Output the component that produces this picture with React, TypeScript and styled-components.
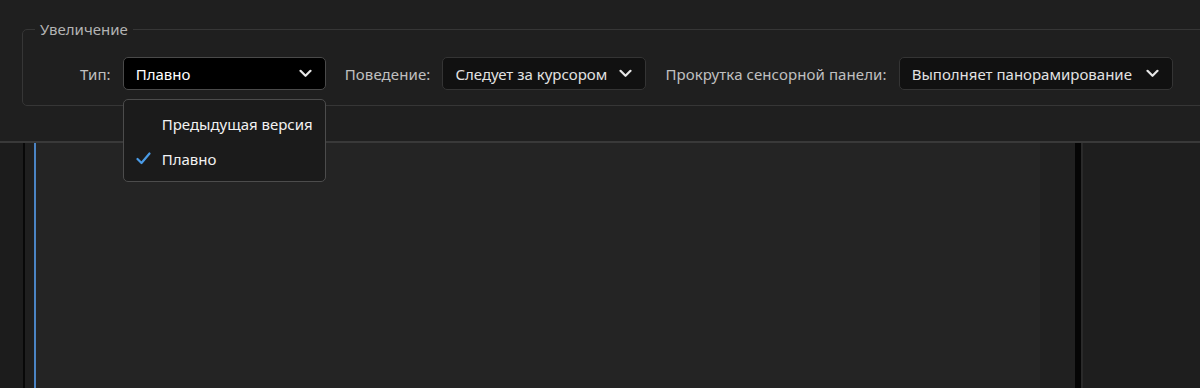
import React, { useState } from "react";
import styled, { createGlobalStyle } from "styled-components";

const GlobalStyle = createGlobalStyle`
  html, body {
    margin: 0;
    padding: 0;
    background: #1f1f1f;
    font-family: "Noto Sans", "Open Sans", sans-serif;
  }
`;

const Chevron = () => (
  <svg width="13" height="9" viewBox="0 0 13 9" fill="none">
    <path d="M1.5 1.8 L6.5 6.8 L11.5 1.8" stroke="#e6e6e6" strokeWidth="2.2" strokeLinecap="round" strokeLinejoin="round" />
  </svg>
);

const Check = () => (
  <svg width="15" height="13" viewBox="0 0 15 13" fill="none">
    <path d="M1.5 7 L5.5 11 L13.5 1.5" stroke="#4a9be6" strokeWidth="2.2" strokeLinecap="round" strokeLinejoin="round" />
  </svg>
);

const zoomTypes = ["Предыдущая версия", "Плавно"];

const App = () => {
  const [type, setType] = useState("Плавно");
  const [open, setOpen] = useState(true);

  return (
    <Page>
      <GlobalStyle />
      <TopPanel>
        <Group>
          <Legend>Увеличение</Legend>
          <Row>
            <Label>Тип:</Label>
            <SelectWrap>
              <Select $width={203} $active={open} onClick={() => setOpen(!open)}>
                <span>{type}</span>
                <Chevron />
              </Select>
              {open && (
                <Menu>
                  {zoomTypes.map((item) => (
                    <MenuItem
                      key={item}
                      onClick={() => {
                        setType(item);
                        setOpen(false);
                      }}
                    >
                      <CheckSlot>{type === item && <Check />}</CheckSlot>
                      {item}
                    </MenuItem>
                  ))}
                </Menu>
              )}
            </SelectWrap>
            <Label $gap={19}>Поведение:</Label>
            <Select $width={204}>
              <span>Следует за курсором</span>
              <Chevron />
            </Select>
            <Label $gap={19}>Прокрутка сенсорной панели:</Label>
            <Select $width={274}>
              <span>Выполняет панорамирование</span>
              <Chevron />
            </Select>
          </Row>
        </Group>
      </TopPanel>
      <Workspace>
        <Strip $width={23} $bg="#1c1c1c" />
        <Strip $width={2} $bg="#080808" />
        <Strip $width={9} $bg="#1f1f1f" />
        <Strip $width={2} $bg="#4b84c4" />
        <Canvas />
        <Strip $width={35} $bg="#202020" />
        <Strip $width={6} $bg="#050505" />
        <Strip $width={2} $bg="#2a2a2a" />
        <Side />
      </Workspace>
    </Page>
  );
};

export default App;

const Page = styled.div`
  width: 1200px;
  height: 388px;
  display: flex;
  flex-direction: column;
  overflow: hidden;
`;

const TopPanel = styled.div`
  height: 143px;
  flex-shrink: 0;
  background: #1f1f1f;
  border-bottom: 2px solid #393939;
  padding: 21px 0 0 22px;
  box-sizing: border-box;
  position: relative;
  z-index: 1;
`;

const Group = styled.fieldset`
  margin: 0;
  width: 1220px;
  border: 1px solid #363636;
  border-radius: 5px;
  padding: 19px 0 15px 0;
  box-sizing: border-box;
`;

const Legend = styled.legend`
  margin-left: 12px;
  padding: 0 5px;
  font-size: 15px;
  line-height: 17px;
  color: #b3b3b3;
`;

const Row = styled.div`
  display: flex;
  align-items: center;
  padding-left: 57px;
`;

const Label = styled.span<{ $gap?: number }>`
  margin-left: ${(p) => p.$gap ?? 0}px;
  margin-right: 12px;
  font-size: 15px;
  letter-spacing: 0.1px;
  color: #c0c0c0;
  white-space: nowrap;
`;

const SelectWrap = styled.div`
  position: relative;
`;

const Select = styled.div<{ $width: number; $active?: boolean }>`
  width: ${(p) => p.$width}px;
  height: 33px;
  box-sizing: border-box;
  display: flex;
  align-items: center;
  justify-content: space-between;
  padding: 0 13px 0 12px;
  background: ${(p) => (p.$active ? "#000000" : "#111111")};
  border: 1px solid ${(p) => (p.$active ? "#4a4a4a" : "#343434")};
  border-radius: 5px;
  font-size: 15px;
  color: ${(p) => (p.$active ? "#ffffff" : "#e2e2e2")};
  white-space: nowrap;
  cursor: pointer;
`;

const Menu = styled.div`
  position: absolute;
  top: 42px;
  left: 0;
  width: 203px;
  box-sizing: border-box;
  padding: 6px 0 5px;
  background: #1b1b1b;
  border: 1px solid #4c4c4c;
  border-radius: 5px;
`;

const MenuItem = styled.div`
  height: 35px;
  display: flex;
  align-items: center;
  padding-left: 12px;
  font-size: 15px;
  color: #f2f2f2;
  white-space: nowrap;
  cursor: pointer;
`;

const CheckSlot = styled.span`
  width: 26px;
  display: flex;
  align-items: center;
`;

const Workspace = styled.div`
  flex: 1;
  display: flex;
`;

const Strip = styled.div<{ $width: number; $bg: string }>`
  width: ${(p) => p.$width}px;
  flex-shrink: 0;
  background: ${(p) => p.$bg};
`;

const Canvas = styled.div`
  flex: 1;
  background: #242424;
`;

const Side = styled.div`
  width: 117px;
  flex-shrink: 0;
  background: #1e1e1e;
`;
